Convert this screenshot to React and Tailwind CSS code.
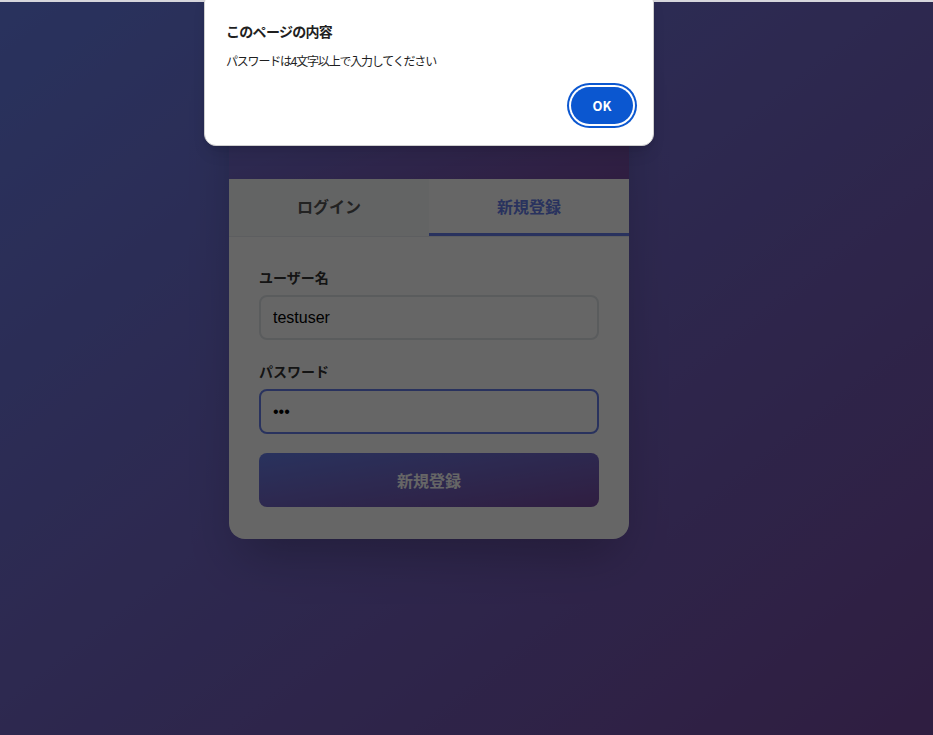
import React from 'react';

const jp = { fontFamily: '"Noto Sans CJK JP", "Noto Sans", sans-serif' };

const Field = ({ label, type, value, focused, gap }) => (
  <div className={gap}>
    <label className="block text-[14px] leading-[20px] font-bold text-[#333] mb-[8px]">{label}</label>
    <input
      type={type}
      value={value}
      readOnly
      className={`block w-full h-[45px] px-[12px] rounded-[8px] border-2 bg-white text-[16px] text-black outline-none ${
        focused ? 'border-[#667eea]' : 'border-[#e1e5e9]'
      }`}
      style={{ fontFamily: '"Liberation Sans", Arial, sans-serif' }}
    />
  </div>
);

const AuthCard = () => (
  <div className="w-[400px] mt-[40px] bg-white rounded-[16px] overflow-hidden shadow-2xl">
    <div className="h-[139px] bg-gradient-to-br from-[#667eea] to-[#764ba2] flex flex-col items-center justify-center text-white">
      <h1 className="text-[26px] font-bold">チャットアプリ</h1>
      <p className="text-[14px] mt-1 opacity-90">ログインまたは新規登録</p>
    </div>

    <div className="flex border-b border-[#e9ecef] bg-[#f8f9fa]">
      <button className="flex-1 h-[57px] text-[16px] font-bold text-[#555] border-b-[3px] border-transparent">
        ログイン
      </button>
      <button className="flex-1 h-[57px] text-[16px] font-bold text-[#667eea] bg-white border-b-[3px] border-[#667eea]">
        新規登録
      </button>
    </div>

    <div className="px-[30px] pt-[30px] pb-[32px]">
      <Field label="ユーザー名" type="text" value="testuser" gap="mb-[21px]" />
      <Field label="パスワード" type="password" value="abc" focused gap="mb-[19px]" />
      <button className="w-full h-[54px] rounded-[8px] bg-gradient-to-br from-[#667eea] to-[#764ba2] text-white text-[16px] font-bold">
        新規登録
      </button>
    </div>
  </div>
);

const AlertDialog = () => (
  <div className="absolute top-[-10px] left-[204px] w-[450px] h-[156px] bg-white rounded-[12px] border border-[#cfcfcf] shadow-lg pt-[30px] pl-[21px] pr-[20px] flex flex-col">
    <div className="text-[14px] leading-[20px] font-bold text-[#1f1f1f] tracking-[-0.7px]">このページの内容</div>
    <div className="mt-[11px] text-[12px] leading-[18px] text-[#1f1f1f] tracking-[-1.2px]">
      パスワードは4文字以上で入力してください
    </div>
    <div className="flex justify-end mt-[17px]">
      <button className="w-[62px] h-[37px] rounded-full bg-[#0b57d0] text-white text-[13px] font-bold shadow-[0_0_0_2px_#ffffff,0_0_0_4px_#0b57d0]">
        OK
      </button>
    </div>
  </div>
);

export default function App() {
  return (
    <div className="relative min-h-screen h-[735px] overflow-hidden bg-gradient-to-br from-[#667eea] to-[#764ba2]" style={jp}>
      <div className="w-[858px] flex justify-center">
        <AuthCard />
      </div>
      <div className="absolute inset-0 bg-black/60" />
      <div className="absolute top-0 left-0 right-0 h-[2px] bg-[#d6d6dc]" />
      <AlertDialog />
    </div>
  );
}
